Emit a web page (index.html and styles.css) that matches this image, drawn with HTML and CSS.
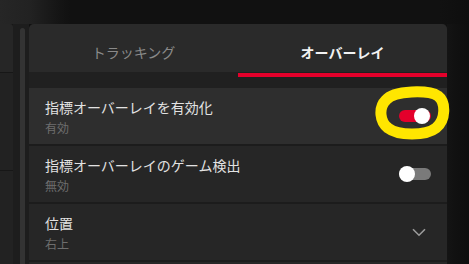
FILE: index.html
```html
<!DOCTYPE html>
<html lang="ja">
<head>
<meta charset="utf-8">
<link rel="stylesheet" href="styles.css">
</head>
<body>
<div class="topbar"></div>
<div class="app">
  <div class="sidebar">
    <div class="side-card"></div>
    <div class="side-block"></div>
    <div class="side-block grow"></div>
  </div>
  <div class="gutter"><div class="scrollbar"></div></div>
  <div class="card">
    <div class="tabs">
      <div class="tab">トラッキング</div>
      <div class="tab active">オーバーレイ</div>
    </div>
    <div class="indicator-band">
      <div></div>
      <div class="indicator"></div>
    </div>
    <div class="rows">
      <div class="row hover">
        <div class="labels">
          <div class="title">指標オーバーレイを有効化</div>
          <div class="sub">有効</div>
        </div>
        <div class="toggle on"><span class="knob"></span></div>
      </div>
      <div class="row">
        <div class="labels">
          <div class="title">指標オーバーレイのゲーム検出</div>
          <div class="sub">無効</div>
        </div>
        <div class="toggle"><span class="knob"></span></div>
      </div>
      <div class="row">
        <div class="labels">
          <div class="title">位置</div>
          <div class="sub">右上</div>
        </div>
        <svg class="chevron" width="14" height="9" viewBox="0 0 14 9"><path d="M1 1.2 L7 7.2 L13 1.2" fill="none" stroke="#9a9a9a" stroke-width="1.6"/></svg>
      </div>
      <div class="row"></div>
    </div>
  </div>
  <div class="outside"></div>
</div>
<svg class="annotation" width="76" height="56" viewBox="0 0 76 56"><path d="M12 14 C20 4, 55 4, 64 10 C72 16, 72 34, 62 42 C52 50, 24 50, 14 42 C6 36, 4 22, 12 14 Z" fill="none" stroke="#ffe600" stroke-width="11" stroke-linejoin="round"/></svg>
</body>
</html>
```

FILE: styles.css
```css
* { box-sizing: border-box; }
html, body { margin: 0; padding: 0; }
body {
  width: 469px;
  height: 264px;
  overflow: hidden;
  background: #111111;
  font-family: "Noto Sans CJK JP", "Noto Sans", sans-serif;
  position: relative;
}
.topbar {
  height: 24px;
  background: linear-gradient(to right, #262626 0px, #222222 30px, #151515 58px, #111111 70px, #111111 440px, #0e0e0e 469px);
}
.app {
  display: flex;
  height: 240px;
}
.sidebar {
  width: 13px;
  flex-shrink: 0;
  display: flex;
  flex-direction: column;
  gap: 1px;
  background: #171717;
}
.side-card {
  height: 48px;
  flex-shrink: 0;
  background: #262626;
  border-top-right-radius: 3px;
}
.side-block {
  height: 97px;
  flex-shrink: 0;
  background: #222222;
}
.side-block.grow { flex: 1; }
.gutter {
  width: 16px;
  flex-shrink: 0;
  background: #1d1d1d;
  padding: 4px 4px 0 7px;
}
.scrollbar {
  width: 5px;
  height: 100%;
  background: #333333;
  border-radius: 3px 3px 0 0;
}
.card {
  width: 418px;
  flex-shrink: 0;
  background: #1c1c1c;
  border-radius: 5px 5px 0 0;
  overflow: hidden;
  display: flex;
  flex-direction: column;
}
.tabs {
  height: 48px;
  flex-shrink: 0;
  background: #2a2a2a;
  display: grid;
  grid-template-columns: 209px 209px;
}
.tab {
  display: flex;
  align-items: center;
  justify-content: center;
  padding-top: 7px;
  font-size: 14px;
  color: #8a8a8a;
}
.tab.active {
  color: #f2f2f2;
  font-weight: bold;
}
.indicator-band {
  height: 16px;
  flex-shrink: 0;
  background: #202020;
  display: grid;
  grid-template-columns: 209px 209px;
  padding-top: 1px;
}
.indicator {
  height: 4px;
  background: #e4002b;
}
.rows {
  flex-shrink: 0;
  display: flex;
  flex-direction: column;
  gap: 2px;
  background: #1c1c1c;
}
.row {
  height: 56px;
  flex-shrink: 0;
  background: #262626;
  display: flex;
  align-items: center;
  justify-content: space-between;
  padding: 0 16px 0 16px;
}
.row.hover { background: #2e2e2e; }
.labels {
  display: flex;
  flex-direction: column;
  gap: 3px;
}
.title {
  font-size: 14px;
  line-height: 20px;
  color: #e2e2e2;
}
.sub {
  font-size: 12px;
  line-height: 16px;
  color: #6e6e6e;
}
.toggle {
  position: relative;
  width: 32px;
  height: 12px;
  border-radius: 6px;
  background: #7a7a7a;
}
.toggle.on { background: #e4002b; }
.knob {
  position: absolute;
  top: -2px;
  left: 0;
  width: 16px;
  height: 16px;
  border-radius: 50%;
  background: #ffffff;
}
.toggle.on .knob { left: 15px; }
.chevron { margin-right: 5px; }
.outside {
  flex: 1;
  background: linear-gradient(to right, #141414, #111111 8px, #0e0e0e);
}
.annotation {
  position: absolute;
  left: 374px;
  top: 86px;
}
```
